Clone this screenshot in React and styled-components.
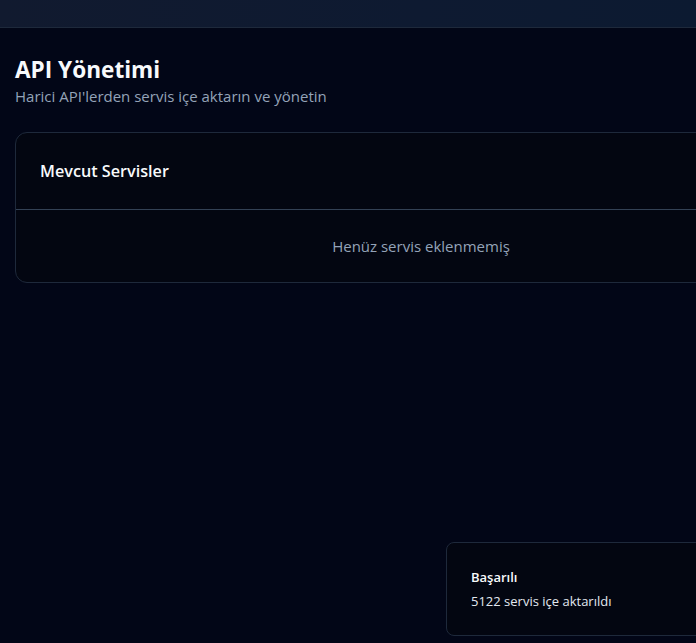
import styled, { createGlobalStyle } from 'styled-components'

const GlobalStyle = createGlobalStyle`
  html, body {
    margin: 0;
    padding: 0;
    background: #020617;
    overflow: hidden;
  }
  body {
    font-family: "Segoe UI", "Open Sans", "Noto Sans", sans-serif;
    color: #f8fafc;
  }
  * {
    box-sizing: border-box;
  }
`

const Page = styled.div`
  min-height: 100vh;
  width: 100%;
  background: #020617;
`

const TopBar = styled.header`
  height: 28px;
  background: linear-gradient(90deg, #111a2f 0%, #0e1a31 60%, #0c1a31 100%);
  border-bottom: 1px solid #1e293b;
`

const Main = styled.main`
  padding: 26px 15px 28px;
  width: 842px;
`

const Heading = styled.div`
  margin-bottom: 26px;
`

const Title = styled.h1`
  margin: 0;
  font-size: 22.6px;
  line-height: 32px;
  font-weight: 700;
  color: #f8fafc;
`

const Subtitle = styled.p`
  margin: 0;
  font-size: 15px;
  line-height: 20px;
  color: #94a3b8;
`

const Card = styled.section`
  border: 1px solid #1e293b;
  border-radius: 12px;
  background: #030611;
`

const CardHeader = styled.div`
  padding: 24px;
  border-bottom: 1px solid #334155;
`

const CardTitle = styled.h2`
  margin: 0;
  font-size: 16.2px;
  line-height: 28px;
  font-weight: 600;
  color: #f8fafc;
`

const CardBody = styled.div`
  padding: 24px;
  text-align: center;
  font-size: 15px;
  line-height: 24px;
  color: #94a3b8;
`

const Toast = styled.div`
  position: fixed;
  left: 446px;
  bottom: 7px;
  width: 400px;
  padding: 24px;
  border: 1px solid #1e293b;
  border-radius: 8px;
  background: #030611;
  display: flex;
  flex-direction: column;
  gap: 4px;
`

const ToastTitle = styled.div`
  font-size: 13px;
  line-height: 20px;
  font-weight: 600;
  color: #f8fafc;
`

const ToastText = styled.div`
  font-size: 13px;
  line-height: 20px;
  color: #e2e8f0;
`

export default function App() {
  return (
    <Page>
      <GlobalStyle />
      <TopBar />
      <Main>
        <Heading>
          <Title>API Yönetimi</Title>
          <Subtitle>Harici API'lerden servis içe aktarın ve yönetin</Subtitle>
        </Heading>
        <Card>
          <CardHeader>
            <CardTitle>Mevcut Servisler</CardTitle>
          </CardHeader>
          <CardBody>Henüz servis eklenmemiş</CardBody>
        </Card>
      </Main>
      <Toast>
        <ToastTitle>Başarılı</ToastTitle>
        <ToastText>5122 servis içe aktarıldı</ToastText>
      </Toast>
    </Page>
  )
}
